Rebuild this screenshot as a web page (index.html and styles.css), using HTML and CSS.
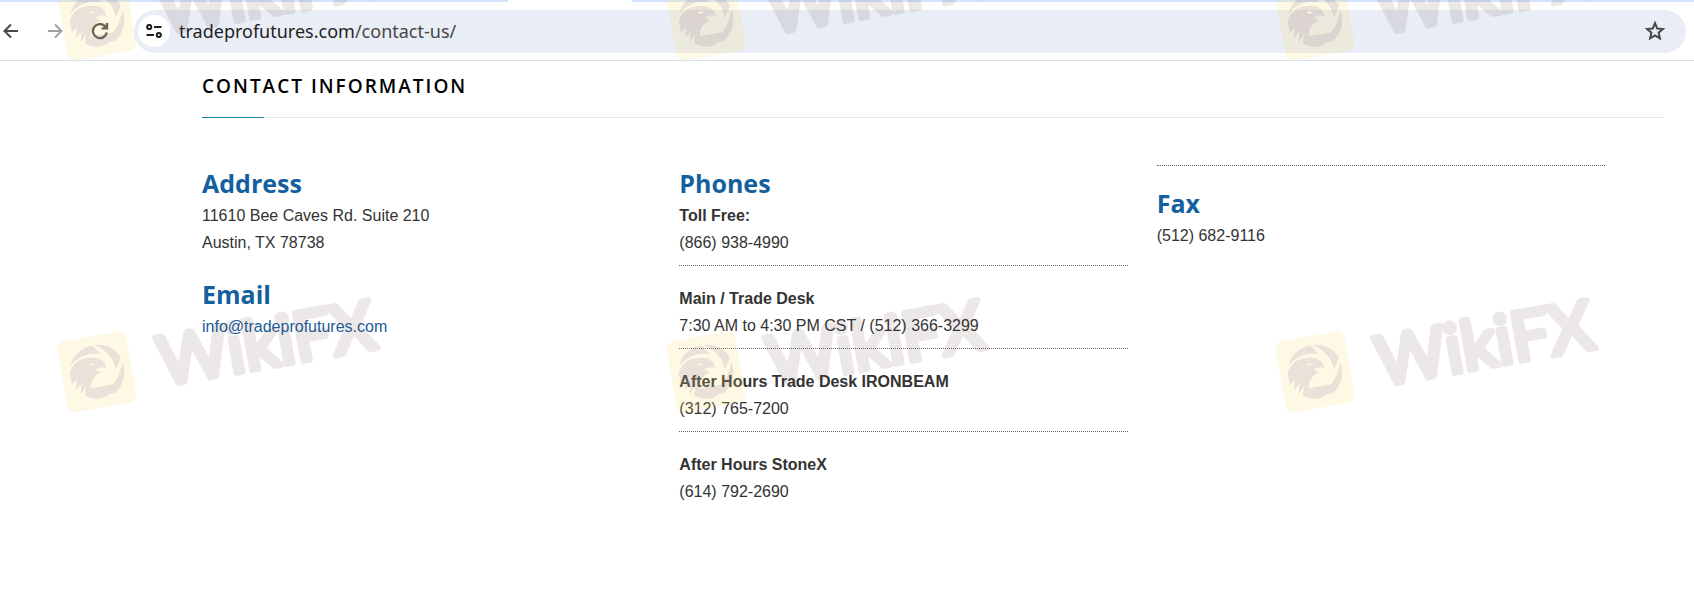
FILE: index.html
```
<!DOCTYPE html>
<html lang="en">
<head>
    <meta charset="UTF-8">
    <meta name="viewport" content="width=device-width, initial-scale=1.0">
    <title>Contact Us</title>
    <link rel="stylesheet" href="styles.css">
</head>
<body>
    <div class="tab-strip"><div class="active-tab"></div></div>
    <header class="toolbar">
        <button class="tool-btn" aria-label="Back">
            <svg width="16" height="16" viewBox="0 0 16 16"><path d="M15 8H2M8 1.5L1.5 8L8 14.5"/></svg>
        </button>
        <button class="tool-btn disabled" aria-label="Forward">
            <svg width="16" height="16" viewBox="0 0 16 16"><path d="M1 8H14M8 1.5L14.5 8L8 14.5"/></svg>
        </button>
        <button class="tool-btn reload" aria-label="Reload">
            <svg width="18" height="18" viewBox="0 0 18 18"><path d="M15.8 10.6A7 7 0 1 1 14 4.2L15.5 5.7M16 1V6.4H10.6"/></svg>
        </button>
        <div class="url-bar">
            <button class="site-info" aria-label="Site information">
                <svg width="16" height="14" viewBox="0 0 16 14"><circle cx="3.2" cy="3" r="2.1"/><path d="M8 3H15.5M0.5 11H8"/><circle cx="12.8" cy="11" r="2.1"/></svg>
            </button>
            <span class="url">tradeprofutures.com<span class="path">/contact-us/</span></span>
            <button class="star" aria-label="Bookmark">
                <svg width="22" height="22" viewBox="0 0 22 22"><path d="M11 3.2L13.2 8.5L18.9 9L14.6 12.7L15.9 18.3L11 15.3L6.1 18.3L7.4 12.7L3.1 9L8.8 8.5Z"/></svg>
            </button>
        </div>
    </header>

    <main>
        <h1>Contact Information</h1>
        <div class="columns">
            <section>
                <h2>Address</h2>
                <p>11610 Bee Caves Rd. Suite 210<br>Austin, TX 78738</p>
                <h2>Email</h2>
                <p><a href="mailto:info@tradeprofutures.com">info@tradeprofutures.com</a></p>
            </section>
            <section>
                <h2>Phones</h2>
                <p class="phone"><strong>Toll Free:</strong><br>(866) 938-4990</p>
                <p class="phone"><strong>Main / Trade Desk</strong><br>7:30 AM to 4:30 PM CST / (512) 366-3299</p>
                <p class="phone"><strong>After Hours Trade Desk IRONBEAM</strong><br>(312) 765-7200</p>
                <p class="phone"><strong>After Hours StoneX</strong><br>(614) 792-2690</p>
            </section>
            <section class="fax">
                <h2>Fax</h2>
                <p>(512) 682-9116</p>
            </section>
        </div>
    </main>

    <!-- Watermark laid over the whole page -->
    <svg class="watermark" width="1694" height="602" viewBox="0 0 1694 602" aria-hidden="true">
        <defs>
            <g id="logo">
                <rect class="tile" x="-35" y="-36" width="70" height="72" rx="8"/>
                <g class="eagle">
                    <path d="M-25 -11C-21 -21 -11 -27 0 -27L7 -17C-3 -21 -15 -19 -25 -11Z"/>
                    <path d="M3 -27C14 -26 23 -19 26 -10L19 1C19 -11 13 -20 3 -27Z"/>
                    <path d="M27 -6C29 7 23 18 14 24L1 23C13 18 22 8 27 -6Z"/>
                    <path d="M-9 15L14 15C17 15 10 24 4 26C-3 28 -11 25 -16 21Z"/>
                    <path d="M-27 -4C-22 -14 -11 -18 1 -14C7 -12 10 -8 10 -2C6 -5 3 -4 -1 -3C2 0 3 1 5 1C-3 2 -8 8 -9 15L-16 21L-13 12L-20 19L-17 9L-24 14L-21 4L-27 8Z"/>
                </g>
                <path class="eye" d="M-7 -10L0 -8L-5 -7Z"/>
            </g>
        </defs>
        <g transform="translate(97 20) rotate(-10)"><use href="#logo"/><text x="62" y="25">WikiFX</text></g>
        <g transform="translate(706 20) rotate(-10)"><use href="#logo"/><text x="62" y="25">WikiFX</text></g>
        <g transform="translate(1315 20) rotate(-10)"><use href="#logo"/><text x="62" y="25">WikiFX</text></g>
        <g transform="translate(97 372) rotate(-10)"><use href="#logo"/><text x="62" y="25">WikiFX</text></g>
        <g transform="translate(706 372) rotate(-10)"><use href="#logo"/><text x="62" y="25">WikiFX</text></g>
        <g transform="translate(1315 372) rotate(-10)"><use href="#logo"/><text x="62" y="25">WikiFX</text></g>
    </svg>
</body>
</html>
```
FILE: styles.css
```
* {
    box-sizing: border-box;
}
body {
    position: relative;
    margin: 0;
    min-height: 100vh;
    overflow-x: hidden;
    background-color: #fff;
    color: #333;
    font-family: "Liberation Sans", Arial, sans-serif;
    font-size: 16px;
    line-height: 27px;
}
button {
    display: flex;
    align-items: center;
    justify-content: center;
    padding: 0;
    border: none;
    background: none;
    cursor: pointer;
}
svg path,
svg circle {
    fill: none;
    stroke: #474747;
    stroke-width: 2;
}

/* Browser bar */
.tab-strip {
    height: 2px;
    background-color: #d3e3fd;
}
.active-tab {
    width: 124px;
    height: 2px;
    margin-left: 30%;
    background-color: #fff;
}
.toolbar {
    display: flex;
    align-items: center;
    height: 59px;
    padding-right: 8px;
    border-bottom: 1px solid #dedfe1;
}
.tool-btn {
    width: 45px;
    height: 32px;
}
.tool-btn:first-child {
    width: 22px;
    margin-right: 10px;
}
.disabled path {
    stroke: #a0a0a0;
}
.reload path {
    stroke-width: 2.4;
}
.url-bar {
    display: flex;
    flex: 1;
    align-items: center;
    height: 43px;
    margin-left: 12px;
    padding: 0 20px 0 4px;
    border-radius: 22px;
    background-color: #e9edf6;
}
.site-info {
    width: 32px;
    height: 32px;
    border-radius: 50%;
    background-color: #fff;
}
.site-info path,
.site-info circle {
    stroke: #1f1f1f;
}
.url {
    flex: 1;
    margin-left: 9px;
    color: #1f1f1f;
    font-family: "Noto Sans", sans-serif;
    font-size: 18px;
}
.path {
    color: #474747;
}

/* Contact page */
main {
    padding: 12px 30px 40px 202px;
}
h1 {
    position: relative;
    margin: 0;
    padding-bottom: 17px;
    border-bottom: 1px solid #e8e8e8;
    color: #000;
    font-family: "Open Sans", sans-serif;
    font-size: 19px;
    font-weight: 600;
    letter-spacing: 2px;
    text-transform: uppercase;
}
/* Blue start of the heading line */
h1::after {
    content: "";
    position: absolute;
    bottom: -1px;
    left: 0;
    width: 62px;
    height: 1px;
    background-color: #1a86b0;
}
.columns {
    display: grid;
    grid-template-columns: repeat(3, 1fr);
    gap: 29px;
    padding: 47px 59px 0 0;
}
h2 {
    margin: 0;
    color: #145f9e;
    font-family: "Open Sans", sans-serif;
    font-size: 25px;
    font-weight: 700;
    line-height: 37px;
}
p {
    margin: 0 0 20px;
}
a {
    color: #1b5c98;
    text-decoration: none;
}
.phone {
    margin-bottom: 19px;
    padding-bottom: 9px;
    border-bottom: 1px dotted #666;
}
.phone:last-child {
    border-bottom: none;
}
.fax {
    border-top: 1px dotted #666;
    padding-top: 19px;
}

/* Watermark */
.watermark {
    position: absolute;
    top: 0;
    left: 0;
    pointer-events: none;
}
.watermark .tile {
    fill: #fbe27a;
    opacity: 0.2;
}
.watermark .eagle path {
    fill: #6f4a90;
    stroke: none;
}
.watermark .eagle {
    opacity: 0.13;
}
.watermark .eye {
    fill: #fdf6dc;
    stroke: none;
}
.watermark text {
    fill: #5a3c3c;
    stroke: #5a3c3c;
    stroke-width: 6;
    stroke-linejoin: round;
    opacity: 0.11;
    font-family: Lato, sans-serif;
    font-size: 68px;
    font-weight: 400;
}
```
